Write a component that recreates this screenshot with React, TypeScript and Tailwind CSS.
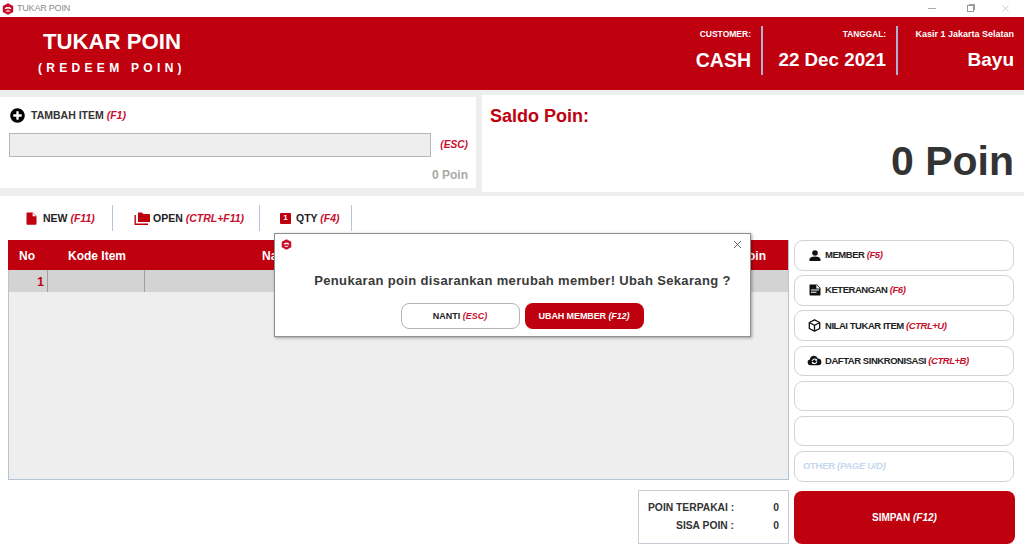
import { X } from "lucide-react";
import { FaPlusCircle } from "react-icons/fa";
import type { ReactNode } from "react";

const RED = "bg-[#bf000f]";

function Logo({ className }: { className: string }) {
  return (
    <svg viewBox="0 0 12 12" className={className}>
      <path d="M6 0.2 11.2 3v6L6 11.8 0.8 9V3z" fill="#c8102e" />
      <path d="M2.8 5.4C4.3 3.6 7.7 3.6 9.2 5.4L8.2 6.2C7 5.1 5 5.1 3.8 6.2z" fill="#fff" />
      <path d="M3.8 8.4C4.6 6.9 7.4 6.9 8.2 8.4z" fill="#fff" />
    </svg>
  );
}

function NewIcon() {
  return (
    <svg viewBox="0 0 11 13" className="h-[13px] w-[11px]">
      <path d="M1 0.5H7L10.5 4V12a.8.8 0 0 1-.8.8H1.3A.8.8 0 0 1 .5 12V1A.6.6 0 0 1 1 .5z" fill="#bf000f" />
      <path d="M6.6 .6V4.2H10.2z" fill="#fff" />
    </svg>
  );
}

function OpenIcon() {
  return (
    <svg viewBox="0 0 16 13" className="h-[13px] w-[16px]">
      <path d="M4 0.5H8L9.3 2H15a1 1 0 0 1 1 1V10H4z" fill="#bf000f" />
      <path d="M1.2 3V12.2H14" fill="none" stroke="#bf000f" strokeWidth="1.4" />
    </svg>
  );
}

function MemberIcon() {
  return (
    <svg viewBox="0 0 12 11" className="h-[11px] w-[12px]">
      <circle cx="6" cy="3" r="2.8" fill="#111" />
      <path d="M0.5 11V9.6C0.5 7.6 2.6 6.6 6 6.6S11.5 7.6 11.5 9.6V11z" fill="#111" />
    </svg>
  );
}

function NoteIcon() {
  return (
    <svg viewBox="0 0 12 12" className="h-[12px] w-[12px]">
      <path d="M1 0.5H8L11.5 4V10.8A.8.8 0 0 1 10.7 11.6H1.3A.8.8 0 0 1 .5 10.8V1A.6.6 0 0 1 1 .5z" fill="#111" />
      <path d="M7.4 .8V4.4H11z" fill="#fff" />
      <path d="M2 6H10M2 8.3H7.5" stroke="#fff" strokeWidth="1.1" />
    </svg>
  );
}

function CubeIcon() {
  return (
    <svg viewBox="0 0 14 14" className="h-[13px] w-[13px]" fill="none" stroke="#111" strokeWidth="1.4">
      <path d="M7 1 12.6 3.8V10.2L7 13 1.4 10.2V3.8z" strokeLinejoin="round" />
      <path d="M1.6 4 7 6.8 12.4 4M7 6.8V13" />
    </svg>
  );
}

function CloudIcon() {
  return (
    <svg viewBox="0 0 17 12" className="h-[11px] w-[15px] shrink-0">
      <path d="M4 11.5A3.4 3.4 0 0 1 3.3 4.8 4.6 4.6 0 0 1 12.2 3.6 4 4 0 0 1 13.2 11.5z" fill="#111" />
      <path d="M5.8 6.8A2.8 2.8 0 0 1 10.6 5.2" fill="none" stroke="#fff" strokeWidth="1.2" />
      <path d="M11.2 7A2.8 2.8 0 0 1 6.4 8.6" fill="none" stroke="#fff" strokeWidth="1.2" />
      <path d="M11.4 3.8V6.2H9z" fill="#fff" />
      <path d="M5.6 10V7.6H8z" fill="#fff" />
    </svg>
  );
}

function Key({ children, className = "text-[#c8102e]" }: { children: ReactNode; className?: string }) {
  return <span className={`italic ${className}`}>{children}</span>;
}

function ToolbarItem({ icon, label, hint, width, pad }: { icon: ReactNode; label: string; hint: string; width: string; pad: string }) {
  return (
    <div className={`flex h-[26px] items-center border-r border-[#b4c3d8] text-[10.5px] font-bold text-[#222] ${width} ${pad}`}>
      {icon}
      <span className="whitespace-nowrap pt-[1px]">
        {label} <Key>{hint}</Key>
      </span>
    </div>
  );
}

function SideButton({ icon, label, hint }: { icon?: ReactNode; label?: string; hint?: string }) {
  return (
    <div className="flex h-[30.5px] w-[220px] items-center rounded-[9px] border border-[#d2d2d2] bg-white pl-[12px] text-[9.5px] font-bold tracking-[-0.45px] text-[#222]">
      <span className="mr-[3px] flex w-[15px] justify-center">{icon}</span>
      {label && (
        <span className="whitespace-nowrap">
          {label} <Key>{hint}</Key>
        </span>
      )}
    </div>
  );
}

export default function App() {
  return (
    <div className="relative flex h-[553px] w-[1024px] flex-col overflow-hidden bg-white font-['Liberation_Sans',Arial,sans-serif]">
      {/* title bar */}
      <div className="flex h-[17px] items-center justify-between pl-[2px] pr-[13px]">
        <div className="flex items-center gap-[3px] text-[9px] tracking-[-0.2px] text-[#8a8a8a]">
          <Logo className="h-[12px] w-[12px]" />
          TUKAR POIN
        </div>
        <div className="flex items-center text-[#9a9a9a]">
          <div className="h-px w-[8px] bg-[#aaa]" />
          <div className="ml-[31px] h-[7px] w-[7px] border border-[#9a9a9a] shadow-[1.5px_-1.5px_0_-0.5px_#9a9a9a]" />
          <X size={11} strokeWidth={1} className="ml-[26px]" />
        </div>
      </div>

      {/* red header */}
      <div className={`flex h-[73px] justify-between ${RED} text-white`}>
        <div className="w-[230px]">
          <div className="pl-[43px] pt-[11px] text-[22.2px] font-bold leading-[28px]">TUKAR POIN</div>
          <div className="pl-[38px] pt-[5px] text-[12px] font-bold leading-[14px] tracking-[4.3px]">(REDEEM POIN)</div>
        </div>
        <div className="flex pt-[9px]">
          <div className="flex h-[49px] w-[202px] flex-col items-end border-r-2 border-[#a9b4d6] pr-[10px]">
            <div className="pt-[2px] text-[8.5px] font-bold leading-[12px]">CUSTOMER:</div>
            <div className="pt-[8px] text-[19.5px] font-bold leading-[24px]">CASH</div>
          </div>
          <div className="flex h-[49px] w-[135px] flex-col items-end border-r-2 border-[#a9b4d6] pr-[10px]">
            <div className="pt-[2px] text-[8.3px] font-bold leading-[12px]">TANGGAL:</div>
            <div className="pt-[8px] text-[18.8px] font-bold leading-[24px]">22 Dec 2021</div>
          </div>
          <div className="flex h-[49px] w-[126px] flex-col items-end pr-[10px]">
            <div className="pt-[2px] text-[9px] font-bold leading-[12px]">Kasir 1 Jakarta Selatan</div>
            <div className="pt-[8px] text-[19px] font-bold leading-[24px]">Bayu</div>
          </div>
        </div>
      </div>

      {/* item + saldo panels */}
      <div className="flex h-[106px] bg-[#eeeeee] pt-[5px]">
        <div className="mt-[2px] h-[91px] w-[476px] bg-white pl-[9px] pr-[8px]">
          <div className="flex h-[36px] items-center gap-[6px] pl-[1px] pt-[1px] text-[10.5px] font-bold text-[#333]">
            <FaPlusCircle size={15} className="text-black" />
            <span className="pt-[1px]">
              TAMBAH ITEM <Key>(F1)</Key>
            </span>
          </div>
          <div className="flex items-center justify-between">
            <div className="h-[24px] w-[422px] border border-[#b5b5b5] bg-[#eeeeee]" />
            <Key className="text-[10.2px] font-bold text-[#c8102e]">(ESC)</Key>
          </div>
          <div className="pt-[9px] text-right text-[12px] font-bold text-[#a8a8a8]">0 Poin</div>
        </div>
        <div className="ml-[6px] flex h-[97px] flex-1 flex-col justify-between bg-white pl-[8px] pr-[10px]">
          <div className="pt-[9px] text-[18px] font-bold leading-[24px] text-[#bf000f]">Saldo Poin:</div>
          <div className="pb-[8px] text-right text-[41px] font-bold leading-[46px] text-[#333]">0 Poin</div>
        </div>
      </div>

      {/* toolbar */}
      <div className="flex h-[44px] items-start bg-white pl-[8px] pt-[9px]">
        <ToolbarItem width="w-[105px]" pad="gap-[6px] pl-[18px]" icon={<NewIcon />} label="NEW" hint="(F11)" />
        <ToolbarItem width="w-[147px]" pad="gap-[3px] pl-[21px]" icon={<OpenIcon />} label="OPEN" hint="(CTRL+F11)" />
        <ToolbarItem
          width="w-[92px]"
          pad="gap-[5px] pl-[20px]"
          icon={
            <span className="flex h-[11px] w-[11px] items-center justify-center rounded-[1px] bg-[#bf000f] text-[8px] text-white">1</span>
          }
          label="QTY"
          hint="(F4)"
        />
      </div>

      {/* table + side buttons */}
      <div className="flex flex-1 gap-[5px] bg-white pl-[8px] pr-[9px]">
        <div className="flex w-[781px] flex-col">
          <div className="flex h-[240px] flex-col border border-t-0 border-[#b4c3d8] bg-[#eeeeee]">
            <div className={`-ml-px flex h-[30px] items-center pt-[2px] ${RED} text-[12px] font-bold text-white`}>
              <div className="w-[39px] pl-[11px]">No</div>
              <div className="w-[193px] pl-[21px]">Kode Item</div>
              <div className="flex-1 pl-[22px]">Nama</div>
              <div className="w-[48px]">Poin</div>
            </div>
            <div className="flex h-[22px] bg-[#d3d3d3] text-[12px] font-bold text-[#bf000f]">
              <div className="w-[39px] border-r border-[#a0a0a0] pr-[3px] pt-[3px] text-right">1</div>
              <div className="w-[97px] border-r border-[#a0a0a0]" />
            </div>
          </div>
          <div className="flex justify-end pt-[10px]">
            <div className="flex h-[54px] w-[151px] flex-col justify-center gap-[4px] border border-[#c9ced6] pl-[9px] pr-[9px] text-[10.3px] font-bold leading-[14px] text-[#333]">
              <div className="flex justify-between">
                <span className="w-[86px] whitespace-nowrap text-right">POIN TERPAKAI :</span>
                <span>0</span>
              </div>
              <div className="flex justify-between">
                <span className="w-[86px] whitespace-nowrap text-right">SISA POIN :</span>
                <span>0</span>
              </div>
            </div>
          </div>
        </div>

        <div className="flex w-[221px] flex-col gap-[4.7px]">
          <SideButton icon={<MemberIcon />} label="MEMBER" hint="(F5)" />
          <SideButton icon={<NoteIcon />} label="KETERANGAN" hint="(F6)" />
          <SideButton icon={<CubeIcon />} label="NILAI TUKAR ITEM" hint="(CTRL+U)" />
          <SideButton icon={<CloudIcon />} label="DAFTAR SINKRONISASI" hint="(CTRL+B)" />
          <SideButton />
          <SideButton />
          <div className="flex h-[30.5px] w-[220px] items-center rounded-[9px] border border-[#d2d2d2] bg-white pl-[8px] text-[9.5px] font-bold tracking-[-0.3px] text-[#c5d8ee]">
            <span>
              OTHER <span className="italic">(PAGE U/D)</span>
            </span>
          </div>
          <div className={`mt-[5px] flex h-[53px] items-center justify-center rounded-[8px] ${RED} pb-[1px] text-[10px] font-bold text-white`}>
            <span>
              SIMPAN <span className="italic">(F12)</span>
            </span>
          </div>
        </div>
      </div>

      {/* confirm dialog */}
      <div className="absolute left-[274px] top-[233px] flex h-[104px] w-[477px] flex-col border border-[#8f8f8f] bg-white shadow-[1px_1px_3px_rgba(0,0,0,0.35)]">
        <div className="flex h-[20px] items-center justify-between pl-[6px] pr-[6px]">
          <Logo className="h-[11px] w-[11px]" />
          <X size={13} strokeWidth={1.4} className="text-[#333]" />
        </div>
        <div className="pl-[20px] pt-[18px] text-center text-[13px] font-bold leading-[18px] tracking-[0.35px] text-[#3a3a3a]">
          Penukaran poin disarankan merubah member! Ubah Sekarang ?
        </div>
        <div className="flex justify-center gap-[5px] pl-[19px] pt-[13px]">
          <div className="flex h-[26px] w-[119px] items-center justify-center rounded-[8px] border border-[#b5b5b5] pt-[1px] text-[9px] font-bold text-[#222]">
            <span>
              NANTI <Key>(ESC)</Key>
            </span>
          </div>
          <div className={`flex h-[26px] w-[119px] items-center justify-center rounded-[8px] ${RED} pt-[1px] text-[9px] font-bold tracking-[-0.1px] text-white`}>
            <span>
              UBAH MEMBER <span className="italic">(F12)</span>
            </span>
          </div>
        </div>
      </div>
    </div>
  );
}
